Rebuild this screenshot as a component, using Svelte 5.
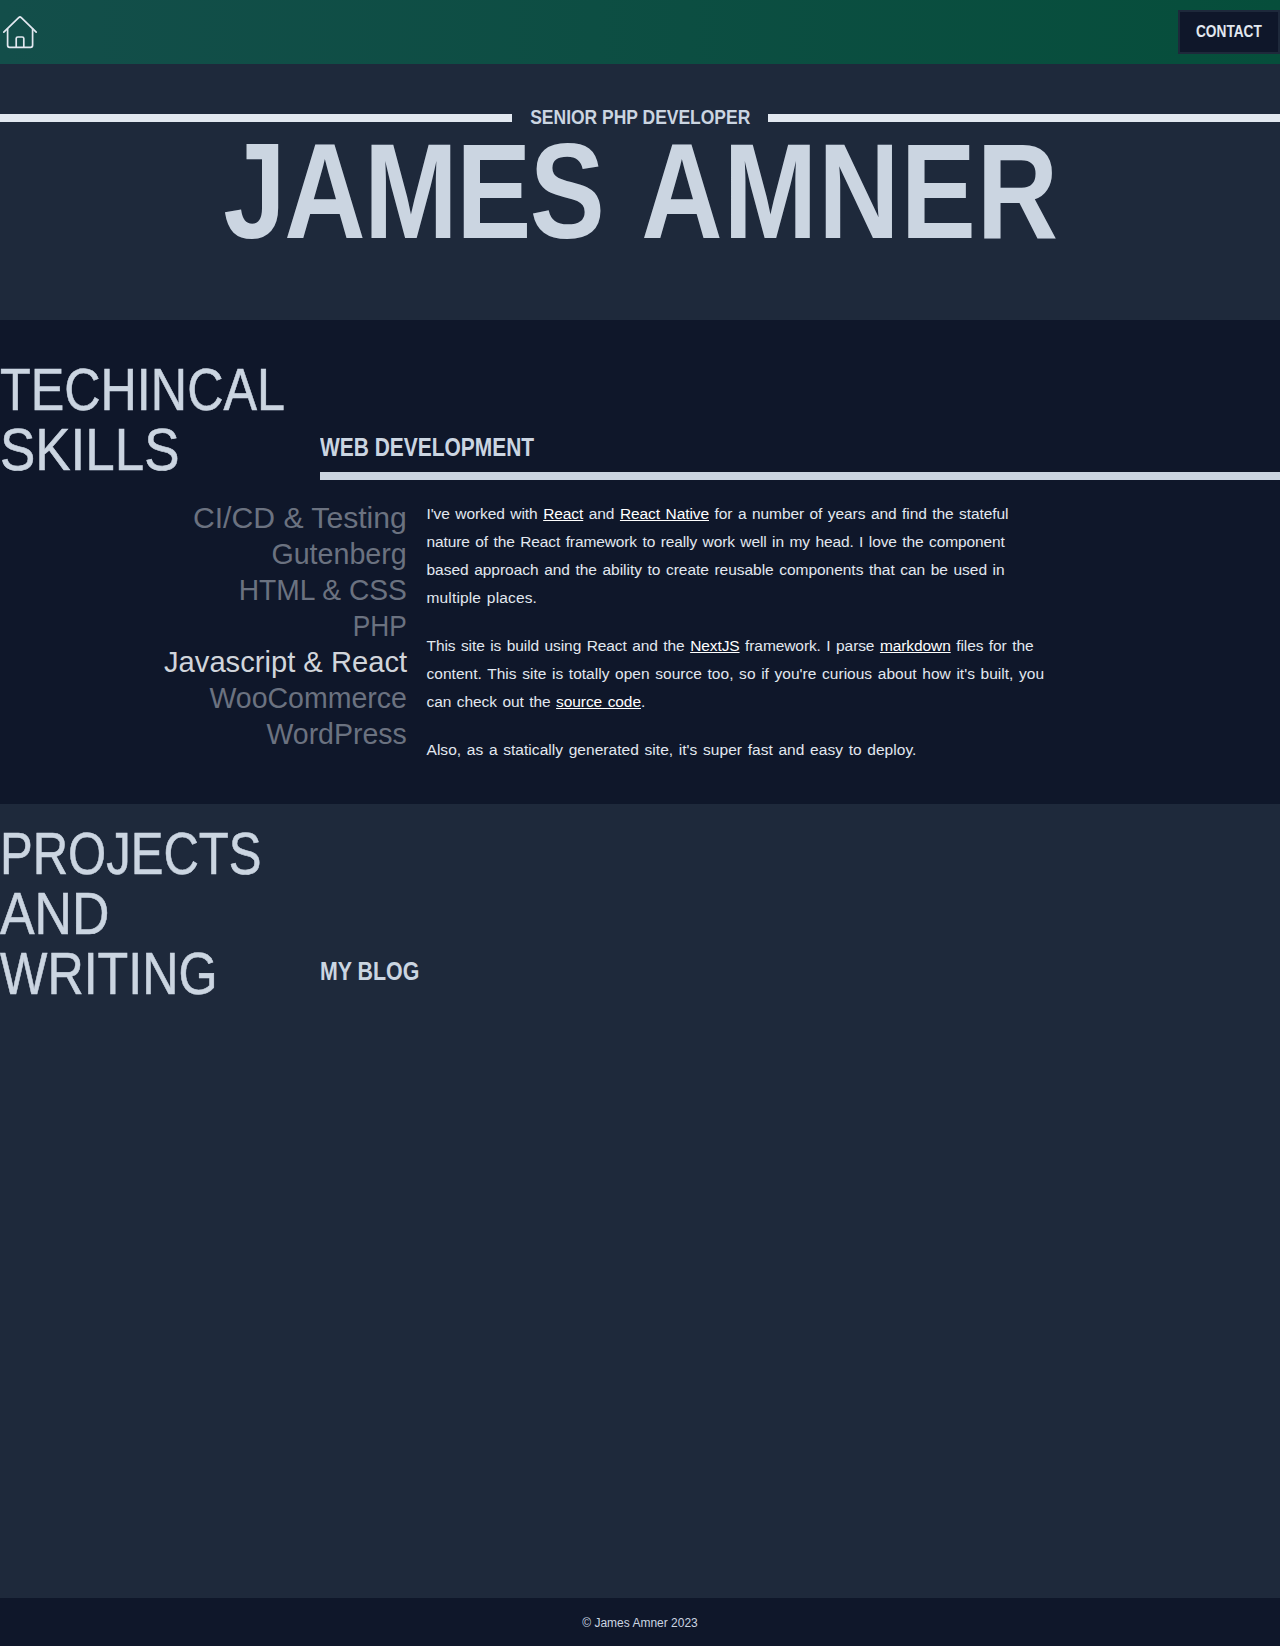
<script>
  const skills = [
    { name: 'CI/CD & Testing', stretch: 1.005 },
    { name: 'Gutenberg', stretch: 0.955 },
    { name: 'HTML & CSS', stretch: 0.94 },
    { name: 'PHP', stretch: 0.875 },
    { name: 'Javascript & React', stretch: 0.972 },
    { name: 'WooCommerce', stretch: 0.95 },
    { name: 'WordPress', stretch: 0.95 },
  ];
  let active = $state('Javascript & React');

  const technical = [
    { text: 'TECHINCAL', stretch: 0.838 },
    { text: 'SKILLS', stretch: 0.882 },
  ];
  const projects = [
    { text: 'PROJECTS', stretch: 0.817 },
    { text: 'AND', stretch: 0.863 },
    { text: 'WRITING', stretch: 0.837 },
  ];

  // Each line is a run of text pieces; pieces with `link` are underlined anchors.
  const paragraphs = [
    [
      { track: -0.08, parts: [{ t: "I've worked with " }, { t: 'React', link: true }, { t: ' and ' }, { t: 'React Native', link: true }, { t: ' for a number of years and find the stateful' }] },
      { track: -0.11, parts: [{ t: 'nature of the React framework to really work well in my head. I love the component' }] },
      { track: -0.03, parts: [{ t: 'based approach and the ability to create reusable components that can be used in' }] },
      { track: 0.15, parts: [{ t: 'multiple places.' }] },
    ],
    [
      { track: -0.09, parts: [{ t: 'This site is build using React and the ' }, { t: 'NextJS', link: true }, { t: ' framework. I parse ' }, { t: 'markdown', link: true }, { t: ' files for the' }] },
      { track: 0.02, parts: [{ t: "content. This site is totally open source too, so if you're curious about how it's built, you" }] },
      { track: -0.08, parts: [{ t: 'can check out the ' }, { t: 'source code', link: true }, { t: '.' }] },
    ],
    [
      { track: 0.04, parts: [{ t: "Also, as a statically generated site, it's super fast and easy to deploy." }] },
    ],
  ];
</script>

<div class="page">
  <header class="topbar">
    <a class="home" href="#home" aria-label="Home">
      <svg viewBox="0 0 40 40" width="40" height="40">
        <path d="M3.8 21.2 L18.7 6.6 Q20 5.4 21.3 6.6 L36.2 21.2" />
        <path d="M7.6 17.8 V34.3 Q7.6 36.3 9.6 36.3 H30.6 Q32.6 36.3 32.6 34.3 V17.8" />
        <path d="M16.2 36 V27.6 Q16.2 26 17.8 26 H22.2 Q23.8 26 23.8 27.6 V36" />
      </svg>
    </a>
    <button class="contact"><span>CONTACT</span></button>
  </header>

  <section class="hero">
    <div class="role">
      <span class="rule"></span>
      <h2><span>SENIOR PHP DEVELOPER</span></h2>
      <span class="rule"></span>
    </div>
    <h1><span class="name"><span class="first">JAMES</span>{' '}<span class="last">AMNER</span></span></h1>
  </section>

  <section class="technical">
    <div class="heading">
      <h2 class="title">
        {#each technical as line}
          <span style:transform="scaleX({line.stretch})">{line.text}</span>
        {/each}
      </h2>
      <h3 class="sub ruled"><span>WEB DEVELOPMENT</span></h3>
    </div>
    <div class="body">
      <ul>
        {#each skills as skill}
          <li class:active={skill.name === active}>
            <button onclick={() => (active = skill.name)} style:transform="scaleX({skill.stretch})">{skill.name}</button>
          </li>
        {/each}
      </ul>
      <article>
        {#each paragraphs as lines}
          <p>
            {#each lines as line}
              <span class="line" style:letter-spacing="{line.track}px">{#each line.parts as part}{#if part.link}<a href="#link">{part.t}</a>{:else}{part.t}{/if}{/each}</span>
            {/each}
          </p>
        {/each}
      </article>
    </div>
  </section>

  <section class="projects">
    <div class="heading">
      <h2 class="title">
        {#each projects as line}
          <span style:transform="scaleX({line.stretch})">{line.text}</span>
        {/each}
      </h2>
      <h3 class="sub blog"><span>MY BLOG</span></h3>
    </div>
  </section>

  <footer>© James Amner 2023</footer>
</div>

<style>
  :global(body) { margin: 0; background: #1e293b; }
  .page {
    display: flex;
    flex-direction: column;
    min-height: 1646px;
    overflow: hidden;
    font-family: "Liberation Sans", Arial, sans-serif;
    color: #cbd5e1;
    background: #1e293b;
  }
  h1, h2, h3, p, ul { margin: 0; padding: 0; }
  button { font: inherit; color: inherit; cursor: pointer; }

  .topbar {
    display: flex;
    align-items: center;
    justify-content: space-between;
    height: 64px;
    background: linear-gradient(to right, #134e4a, #064e3b);
  }
  .home { display: block; width: 40px; height: 40px; margin-bottom: 3px; }
  .home svg {
    display: block;
    fill: none;
    stroke: #e2e8f0;
    stroke-width: 1.7;
    stroke-linecap: round;
    stroke-linejoin: round;
  }
  .contact {
    box-sizing: border-box;
    display: flex;
    align-items: center;
    justify-content: center;
    width: 102px;
    height: 44px;
    padding: 0;
    border: 2px solid #1e293b;
    background: #0f172a;
    color: #e2e8f0;
    font-size: 17px;
    font-weight: 700;
  }
  .contact span { transform: scaleX(0.805); }

  .hero { height: 256px; box-sizing: border-box; padding-top: 39px; }
  .role {
    display: grid;
    grid-template-columns: 512px 256px 512px;
    align-items: center;
    height: 30px;
  }
  .rule { height: 8px; background: #e2e8f0; }
  .role h2 {
    display: flex;
    justify-content: center;
    font-size: 21px;
    line-height: 28px;
    white-space: nowrap;
    padding-bottom: 2px;
  }
  .role h2 span { transform: scaleX(0.832); }
  h1 {
    display: flex;
    justify-content: center;
    padding-left: 2px;
    font-size: 135px;
    line-height: 118px;
    white-space: pre;
  }
  .name { transform: scaleX(0.834); word-spacing: 8px; }
  .first { letter-spacing: -1.9px; }
  .last { letter-spacing: 1.25px; }

  .technical { height: 484px; box-sizing: border-box; padding-top: 40px; background: #0f172a; }
  .hero + .technical { margin-top: 0; }
  .heading { display: grid; grid-template-columns: 320px 1fr; align-items: end; }
  .title { font-size: 60px; line-height: 60px; font-weight: 400; -webkit-text-stroke: 0.6px #cbd5e1; }
  .title span { display: block; width: max-content; transform-origin: left; }
  .sub { font-size: 25px; line-height: 32px; font-weight: 700; }
  .sub span { display: block; width: max-content; transform-origin: left; transform: scaleX(0.838); }
  .ruled { padding-bottom: 9px; border-bottom: 8px solid #cbd5e1; }
  .blog { padding-bottom: 17px; }
  .blog span { transform: scaleX(0.855); }

  .body { display: grid; grid-template-columns: 407px 640px; gap: 19.5px; padding-top: 20px; }
  ul { list-style: none; text-align: right; font-size: 30px; line-height: 36px; color: #6b7280; }
  li { height: 36px; }
  li button {
    display: inline-block;
    padding: 0;
    border: 0;
    background: none;
    line-height: 36px;
    transform-origin: right;
    white-space: nowrap;
  }
  .active { color: #d1d5db; }
  article { font-size: 15.5px; line-height: 28px; word-spacing: 1.3px; color: #e2e8f0; }
  p + p { margin-top: 20px; }
  .line { display: block; white-space: pre; }
  article a { color: #fff; text-decoration: underline; }

  .projects { flex: 1; padding-top: 20px; }
  footer {
    height: 48px;
    line-height: 50px;
    background: #0f172a;
    text-align: center;
    font-size: 12px;
  }
</style>
